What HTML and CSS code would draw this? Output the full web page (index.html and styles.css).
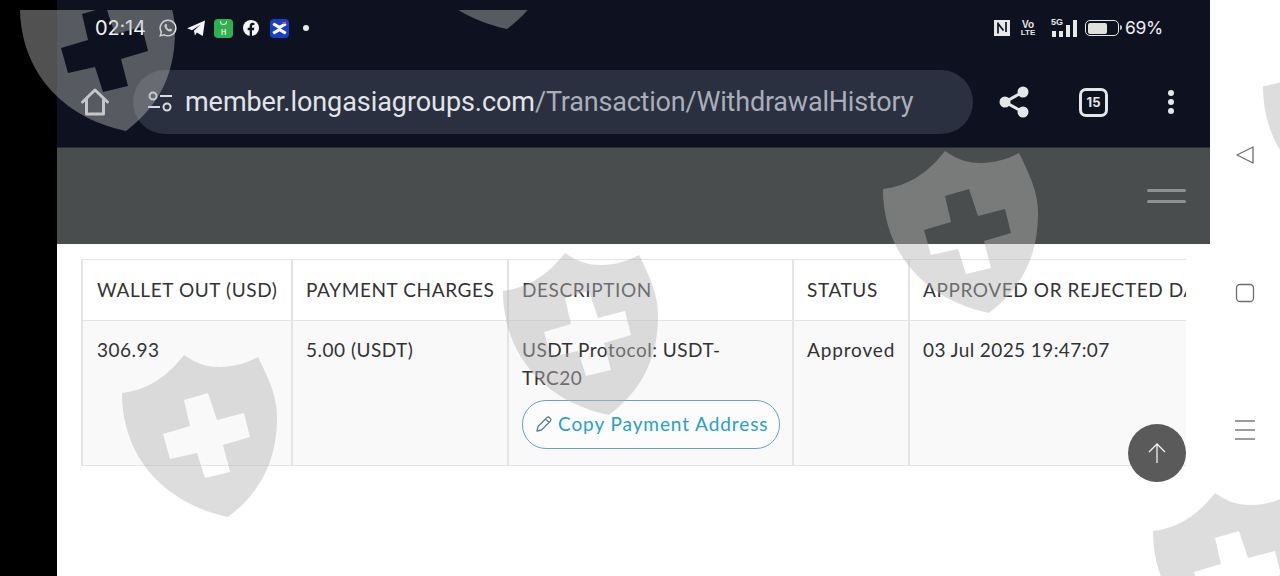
FILE: index.html
```html
<!DOCTYPE html>
<html lang="en">
<head>
<meta charset="utf-8">
<title>Withdrawal History</title>
<link rel="stylesheet" href="styles.css">
</head>
<body>
<div class="device">
  <div class="left-bar"></div>
  <main class="screen">
    <header class="browser">
      <div class="status">
        <div class="status-left">
          <span class="time">02:14</span>
          <svg class="ico-18" viewBox="0 0 18 18"><path d="M9 1.2a7.8 7.8 0 0 0-6.7 11.8L1.3 16.8l3.9-1A7.8 7.8 0 1 0 9 1.2z" fill="none" stroke="#e6e8ea" stroke-width="1.5"/><path d="M6.3 5.2c-.9.6-1 1.7-.5 3 .8 1.900 2.300 3.500 4.300 4.200 1.300.4 2.400.1 2.800-.9l.2-1-2-1-.8 1c-1.200-.4-2.300-1.500-2.800-2.700l.8-.9-.9-2.100z" fill="#e6e8ea"/></svg>
          <svg class="ico-18 ico-tg" viewBox="0 0 18 18"><path d="M.2 9.300 18 1.500 15.800 17 9.800 13.500 8 16.500 6.900 11.800 13.500 5.800 5 11.300z" fill="#f4f5f6"/></svg>
          <span class="app-shop"><span class="shop-arc"></span><span class="shop-mark">H</span></span>
          <svg class="ico-18" viewBox="0 0 18 18"><circle cx="9" cy="9" r="8" fill="#f4f5f6"/><path d="M7.700 17V11.200H5.700V8.800h2V7c0-2.100 1.200-3.200 3-3.200l1.700.1v2.100h-1.100c-1 0-1.300.6-1.300 1.300v1.500h2.300l-.4 2.400h-1.900V17z" fill="#0e1220"/></svg>
          <span class="app-x"><svg viewBox="0 0 18 18"><path d="M3 4.500 9 8l6-3.500M3 13.500 9 10l6 3.500" fill="none" stroke="#fff" stroke-width="3"/><path d="M12 4l3-.5" stroke="#e0526a" stroke-width="2"/></svg></span>
          <span class="dot"></span>
        </div>
        <div class="status-right">
          <svg class="ico-nfc" viewBox="0 0 16 16"><path d="M0 0h16v16H0z" fill="#e6e8ea"/><path d="M4 2.500v11M4 3.500l5.500 7M12 2v10" fill="none" stroke="#0e1220" stroke-width="1.700"/></svg>
          <span class="volte"><span>Vo</span><span>LTE</span></span>
          <span class="signal">
            <span class="five-g">5G</span>
            <span class="bars"><i class="b1"></i><i class="b2"></i><i class="b3"></i><i class="b4"></i></span>
          </span>
          <span class="battery"><span class="battery-fill"></span></span>
          <span class="pct">69%</span>
        </div>
      </div>
      <div class="toolbar">
        <svg class="home" viewBox="0 0 30 30"><path d="M2.500 15 15 3l12.500 12M6.500 12.500V27h17V12.500" fill="none" stroke="#d3d6da" stroke-width="3" stroke-linejoin="round" stroke-linecap="round"/></svg>
        <div class="omnibox">
          <svg class="tune" viewBox="0 0 26 22"><circle cx="6" cy="5" r="3.500" fill="none" stroke="#d8dbe0" stroke-width="2"/><path d="M13 5h12M1 16h12" stroke="#d8dbe0" stroke-width="2.200"/><circle cx="20" cy="16" r="3.500" fill="none" stroke="#d8dbe0" stroke-width="2"/></svg>
          <span class="url"><span class="host">member.longasiagroups.com</span><span class="path">/Transaction/WithdrawalHistory</span></span>
        </div>
        <svg class="share" viewBox="0 0 32 34"><path d="M25 7 7 17l18 10" fill="none" stroke="#e4e6ea" stroke-width="3"/><circle cx="25" cy="7" r="5.500" fill="#e4e6ea"/><circle cx="7" cy="17" r="5.500" fill="#e4e6ea"/><circle cx="25" cy="27" r="5.500" fill="#e4e6ea"/></svg>
        <span class="tabs">15</span>
        <span class="kebab"><i></i><i></i><i></i></span>
      </div>
    </header>
    <nav class="navbar">
      <span class="burger"><i></i><i></i></span>
    </nav>
    <section class="content">
      <div class="table-wrap">
        <table class="history">
          <colgroup><col class="c1"><col class="c2"><col class="c3"><col class="c4"><col class="c5"></colgroup>
          <thead>
            <tr><th>WALLET OUT (USD)</th><th>PAYMENT CHARGES</th><th>DESCRIPTION</th><th>STATUS</th><th>APPROVED OR REJECTED DATE</th></tr>
          </thead>
          <tbody>
            <tr>
              <td>306.93</td>
              <td>5.00 (USDT)</td>
              <td>
                <div class="desc">USDT Protocol: USDT-TRC20</div>
                <button class="copy"><svg viewBox="0 0 18 18"><path d="M2 16l1-4.500L11.800 2.700a2 2 0 0 1 2.800 0l.7.7a2 2 0 0 1 0 2.800L6.500 15z M10.500 4l3.500 3.500" fill="none" stroke="#5b7f96" stroke-width="1.300" stroke-linejoin="round"/></svg>Copy Payment Address</button>
              </td>
              <td class="status-cell">Approved</td>
              <td class="date-cell">03 Jul 2025 19:47:07</td>
            </tr>
          </tbody>
        </table>
      </div>
      <button class="to-top" aria-label="Back to top"><svg viewBox="0 0 20 22"><path d="M10 21V2M2 10l8-8 8 8" fill="none" stroke="#f0f0f0" stroke-width="1.300"/></svg></button>
    </section>
  </main>
  <aside class="sys-nav">
    <svg class="sys-ico" viewBox="0 0 20 20"><path d="M18 2v16L2 10z" fill="none" stroke="#6a6e72" stroke-width="1.300" stroke-linejoin="round"/></svg>
    <svg class="sys-ico" viewBox="0 0 20 20"><rect x="1.500" y="1.500" width="17" height="17" rx="3.500" fill="none" stroke="#6a6e72" stroke-width="1.300"/></svg>
    <svg class="sys-ico" viewBox="0 0 20 20"><path d="M0 1h20M0 10h20M0 19h20" stroke="#7a7d80" stroke-width="1.300"/></svg>
  </aside>
</div>
<div class="watermark" aria-hidden="true">
  <svg class="shield s1" viewBox="0 0 155 163"><use href="#shield"/></svg>
  <svg class="shield s2" viewBox="0 0 155 163"><use href="#shield"/></svg>
  <svg class="shield s3" viewBox="0 0 155 163"><use href="#shield"/></svg>
  <svg class="shield s4" viewBox="0 0 155 163"><use href="#shield"/></svg>
  <svg class="shield s5" viewBox="0 0 155 163"><use href="#shield"/></svg>
  <svg class="shield s6" viewBox="0 0 155 163"><use href="#shield"/></svg>
  <svg class="shield s7" viewBox="0 0 155 163"><use href="#shield"/></svg>
</div>
<svg class="defs" width="0" height="0"><defs><path id="shield" fill-rule="evenodd" d="M62 0C75 9 85 12 98 12 112 12 125 8 136 2 150 30 155 45 155 62 155 110 135 140 106 162 40 148 0 100 0 38 25 35 45 22 62 0zM62 45 68 71 41 79 48 104 75 98 83 123 108 117 101 90 128 82 122 58 95 65 86 38z"/></defs></svg>
</body>
</html>
```
FILE: styles.css
```css
* { box-sizing: border-box; }
html, body { margin: 0; height: 100%; overflow: hidden; background: #fff; }
i { display: block; }

.device { display: flex; width: 1280px; height: 576px; }
.left-bar { width: 57px; background: #000; flex: none; }
.screen { width: 1153px; flex: none; display: flex; flex-direction: column; background: #fff; }

.browser { height: 148px; background: #0e1220; border-bottom: 1px solid #2a2d33; flex: none; }
.status { display: flex; justify-content: space-between; align-items: center; height: 58px; padding: 0 49px 2px 38px; }
.status-left { display: flex; align-items: center; }
.status-right { display: flex; align-items: center; }
.time { font: 400 20px/1 "Inter", sans-serif; color: #f4f5f6; width: 51px; margin-right: 13px; white-space: nowrap; letter-spacing: -.2px; }
.ico-18 { width: 18px; height: 18px; margin-right: 10px; display: block; }
.ico-tg { margin-right: 9px; }
.app-shop { width: 19px; height: 19px; border-radius: 4px; background: #2fb14f; margin-right: 9px; position: relative; display: flex; justify-content: center; align-items: flex-end; }
.shop-arc { position: absolute; top: 2px; left: 6px; width: 7px; height: 4px; border: 1px solid #d8f5df; border-top: 0; border-radius: 0 0 4px 4px; }
.shop-mark { font: 700 7px/10px "Inter", sans-serif; color: #d8f5df; }
.app-x { width: 19px; height: 19px; border-radius: 4px; background: #1740c8; margin-right: 14px; }
.app-x svg { display: block; width: 19px; height: 19px; }
.dot { width: 6px; height: 6px; border-radius: 50%; background: #e8eaec; }
.ico-nfc { width: 16px; height: 16px; margin-right: 11px; }
.volte { display: flex; flex-direction: column; font: 700 8px/8px "Liberation Sans Narrow", "Liberation Sans", sans-serif; color: #e6e8ea; width: 14px; align-items: center; margin-right: 14px; }
.volte span:first-child { font-size: 10px; line-height: 9px; }
.signal { position: relative; display: block; width: 29px; height: 20px; margin-right: 7px; }
.five-g { position: absolute; left: 2px; top: 0; font: 700 9px/9px "Liberation Sans", sans-serif; color: #e6e8ea; }
.bars { position: absolute; left: 3px; right: 0; bottom: 1px; display: flex; align-items: flex-end; gap: 3px; }
.bars i { width: 4px; background: #e6e8ea; }
.bars .b1 { height: 6px; }
.bars .b2 { height: 6px; }
.bars .b3 { height: 12px; }
.bars .b4 { height: 17px; }
.battery { width: 34px; height: 16px; border: 1.500px solid #e6e8ea; border-radius: 5px; padding: 1.500px; margin-right: 6px; position: relative; display: block; }
.battery::after { content: ""; position: absolute; right: -4px; top: 4px; width: 2px; height: 5px; background: #bfc2c6; border-radius: 0 2px 2px 0; }
.battery-fill { display: block; width: 66%; height: 100%; background: #dfe2dc; border-radius: 2px; }
.pct { font: 400 17.500px/1 "Inter", sans-serif; color: #eceef0; width: 36px; white-space: nowrap; letter-spacing: -.3px; }

.toolbar { display: flex; align-items: center; height: 64px; margin-top: 12px; padding-left: 23px; }
.home { width: 30px; height: 32px; flex: none; margin-right: 23px; }
.omnibox { width: 840px; height: 64px; border-radius: 32px; background: #2a303f; display: flex; align-items: center; padding-left: 14px; flex: none; margin-right: 25px; }
.tune { width: 26px; height: 22px; margin-right: 12px; flex: none; }
.url { font: 400 27px/1 "Roboto", sans-serif; white-space: nowrap; padding-top: 1px; }
.host { color: #e2e4ea; letter-spacing: -.06px; }
.path { color: #a9aeb9; letter-spacing: -.2px; }
.share { width: 32px; height: 34px; flex: none; margin-right: 49px; }
.tabs { width: 29px; height: 29px; border: 3px solid #e4e6ea; border-radius: 7px; font: 700 13px/23px "Inter", sans-serif; text-align: center; color: #e4e6ea; flex: none; margin-right: 60px; }
.kebab { display: flex; flex-direction: column; gap: 3px; flex: none; }
.kebab i { width: 6px; height: 6px; border-radius: 50%; background: #e4e6ea; }

.navbar { height: 96px; background: #4a4d4e; flex: none; display: flex; justify-content: flex-end; align-items: center; padding: 0 24px 0 0; }
.burger { display: flex; flex-direction: column; gap: 8px; width: 39px; }
.burger i { height: 3px; border-radius: 2px; background: #8f9191; }

.content { flex: 1; padding: 15px 24px 0 24px; position: relative; }
.table-wrap { overflow: hidden; width: 1105px; }
.history { border-collapse: collapse; table-layout: fixed; width: 1220px; font: 400 19px/28px "Lato", sans-serif; color: #333; }
.c1 { width: 210px; }
.c2 { width: 216px; }
.c3 { width: 285px; }
.c4 { width: 116px; }
.c5 { width: 393px; }
.history th, .history td { text-align: left; font-weight: 400; border: 1px solid #e4e4e4; border-left-width: 2px; border-right-width: 2px; vertical-align: top; }
.history th { height: 61px; padding: 16px 12px 16px 13px; white-space: nowrap; letter-spacing: .6px; }
.history td { height: 145px; background: #f9f9f9; padding: 15px 12px 15px 13px; letter-spacing: .5px; }
.history td:first-child, .history th:first-child { padding-left: 14px; }
.history .status-cell { letter-spacing: .85px; }
.history .date-cell { letter-spacing: .4px; }
.history td:last-child, .history th:last-child { border-right: 0; white-space: nowrap; }
.desc { width: 210px; }
.copy { display: flex; align-items: center; margin-top: 8px; width: 258px; height: 49px; padding: 0 0 2px 12px; border: 1.500px solid #6aa1c4; border-radius: 24px; background: #fcfcfc; font: 400 19px/1 "Lato", sans-serif; letter-spacing: .92px; color: #26a0c9; white-space: nowrap; }
.copy svg { width: 18px; height: 18px; margin-right: 5px; flex: none; }
.to-top { position: absolute; left: 1071px; top: 180px; width: 58px; height: 58px; border: 0; padding: 0; border-radius: 50%; background: #5a5a5a; display: flex; align-items: center; justify-content: center; }
.to-top svg { width: 20px; height: 22px; }

.sys-nav { flex: 1; display: flex; flex-direction: column; align-items: center; gap: 117.500px; padding-top: 145px; }
.sys-ico { width: 20px; height: 20px; display: block; }

.watermark { position: absolute; left: 0; top: 10px; width: 1280px; height: 566px; overflow: hidden; pointer-events: none; }
.shield { position: absolute; width: 155px; height: 163px; fill: rgba(180,180,180,.45); }
.s1 { left: 20px; top: -41px; }
.s2 { left: 401px; top: -143px; }
.s3 { left: 503px; top: 243px; }
.s4 { left: 122px; top: 345px; }
.s5 { left: 883px; top: 141px; }
.s6 { left: 1263px; top: 38px; }
.s7 { left: 1153px; top: 483px; }
.defs { position: absolute; }
```
